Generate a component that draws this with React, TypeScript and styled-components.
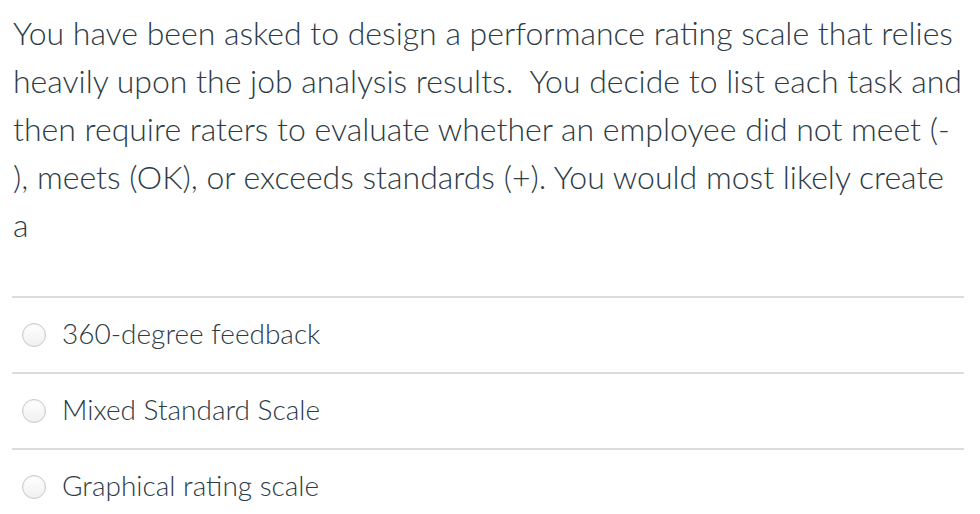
import React from 'react'
import styled, { createGlobalStyle } from 'styled-components'

const GlobalStyle = createGlobalStyle`
  html, body {
    margin: 0;
    padding: 0;
    background: #ffffff;
  }
  body {
    font-family: Lato, 'Open Sans', sans-serif;
    color: #2d3b45;
  }
`

const answers = ['360-degree feedback', 'Mixed Standard Scale', 'Graphical rating scale']

const App = () => {
  return (
    <>
      <GlobalStyle />
      <Wrapper>
        <Question>
          You have been asked to design a performance rating scale that relies heavily upon the
          job analysis results.{'\u00a0'} You decide to list each task and then require raters
          to evaluate whether an employee did not meet (-<wbr />), meets (OK), or exceeds
          standards (+). You would most likely create a
        </Question>
        <AnswerList>
          {answers.map(answer => (
            <Answer key={answer}>
              <Radio type="radio" name="answer" />
              <AnswerLabel>{answer}</AnswerLabel>
            </Answer>
          ))}
        </AnswerList>
      </Wrapper>
    </>
  )
}

const Wrapper = styled.div`
  width: 952px;
  padding: 9px 16px 0 12px;
`

const Question = styled.p`
  margin: 0 2px 47px 1px;
  font-size: 32px;
  line-height: 48px;
  font-weight: 300;
`

const AnswerList = styled.div`
  display: flex;
  flex-direction: column;
`

const Answer = styled.label`
  display: flex;
  align-items: center;
  gap: 16px;
  height: 74px;
  border-top: 2px solid #dcdcdc;
  padding-left: 10px;
`

const Radio = styled.input`
  appearance: none;
  margin: 0;
  width: 24px;
  height: 24px;
  border-radius: 50%;
  border: 1px solid #c8c8c8;
  background: linear-gradient(#ffffff, #f0f0f0);
  box-shadow: inset 0 1px 2px rgba(0, 0, 0, 0.06);
`

const AnswerLabel = styled.span`
  font-size: 28px;
  font-weight: 300;
  line-height: 34px;
  margin-top: -4px;
`

export default App
